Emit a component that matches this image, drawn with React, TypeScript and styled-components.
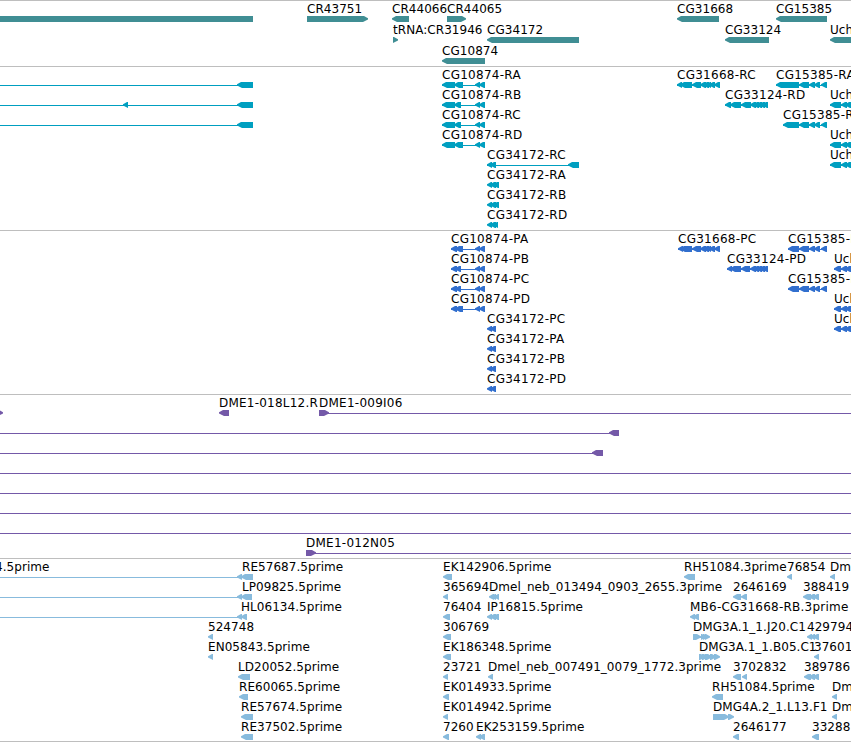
import React from 'react';
import styled, { createGlobalStyle } from 'styled-components';

type Block = [number, number];

interface FeatureData {
  x: number;
  label?: string;
  blocks?: Block[];
  // span of the connecting line
  line?: Block;
  forward?: boolean;
}

interface TrackData {
  name: string;
  color: string;
  rowHeight: number;
  gap: number;
  rows: FeatureData[][];
}

const START = -20;
const END = 871;

const f = (
  x: number,
  label: string,
  blocks: Block[] = [],
  extra: Partial<FeatureData> = {}
): FeatureData => ({ x, label, blocks, ...extra });

const genes: FeatureData[][] = [
  [
    f(START, '', [[START, 253]]),
    f(307, 'CR43751', [[307, 368]], { forward: true }),
    f(392, 'CR44066', [[392, 409]]),
    f(447, 'CR44065', [[447, 466]], { forward: true }),
    f(677, 'CG31668', [[677, 719]]),
    f(776, 'CG15385', [[776, 827]]),
  ],
  [
    f(393, 'tRNA:CR31946', [[393, 398]], { forward: true }),
    f(487, 'CG34172', [[487, 579]]),
    f(725, 'CG33124', [[725, 769]]),
    f(830, 'Uch', [[830, END]]),
  ],
  [f(442, 'CG10874', [[442, 485]])],
];

const cg10874r = (name: string, end: number) =>
  f(442, name, [[442, 455], [454, end], [475, 480], [479, 485]], { line: [442, 485] });
const cg10874p = (name: string, end: number) =>
  f(451, name, [[451, 457], [455, end], [475, 480], [479, 485]], { line: [451, 485] });
const uchR = () => f(830, 'Uch', [[830, 841], [841, 847], [845, 851], [849, 856]], { line: [830, END] });
const uchP = () => f(834, 'Uch', [[834, 841], [841, 847], [845, 851], [849, 856]], { line: [834, END] });

const transcripts: FeatureData[][] = [
  [
    f(START, '', [[237, 253]], { line: [START, 240] }),
    cg10874r('CG10874-RA', 463),
    f(677, 'CG31668-RC', [[677, 682], [680, 692], [692, 701], [700, 706], [703, 709], [706, 711], [709, 715], [714, 720]], { line: [677, 720] }),
    f(776, 'CG15385-RA', [[776, 799], [799, 809], [809, 815], [814, 820], [821, 827]], { line: [776, 827] }),
  ],
  [
    f(START, '', [[123, 128], [237, 253]], { line: [START, 240] }),
    cg10874r('CG10874-RB', 461),
    f(725, 'CG33124-RD', [[725, 731], [730, 741], [741, 751], [750, 756], [753, 759], [756, 762], [759, 765], [762, 768]], { line: [725, 768] }),
    uchR(),
  ],
  [
    f(START, '', [[237, 253]], { line: [START, 240] }),
    cg10874r('CG10874-RC', 461),
    f(783, 'CG15385-RB', [[783, 799], [799, 809], [809, 815], [814, 820], [821, 827]], { line: [783, 827] }),
  ],
  [cg10874r('CG10874-RD', 463), uchR()],
  [f(487, 'CG34172-RC', [[487, 492], [490, 496], [568, 579]], { line: [487, 579] }), uchR()],
  [f(487, 'CG34172-RA', [[487, 492], [490, 496], [493, 499]])],
  [f(487, 'CG34172-RB', [[487, 492], [490, 496], [493, 499]])],
  [f(487, 'CG34172-RD', [[487, 492], [490, 496], [493, 498]])],
];

const cg15385p = (name: string) =>
  f(788, name, [[788, 799], [799, 809], [809, 815], [814, 820], [821, 827]], { line: [788, 827] });

const proteins: FeatureData[][] = [
  [
    cg10874p('CG10874-PA', 463),
    f(678, 'CG31668-PC', [[678, 683], [680, 692], [692, 701], [700, 706], [703, 709], [706, 711], [709, 715], [714, 720]], { line: [678, 720] }),
    cg15385p('CG15385-PA'),
  ],
  [
    cg10874p('CG10874-PB', 461),
    f(727, 'CG33124-PD', [[727, 732], [730, 741], [741, 750], [750, 756], [753, 759], [756, 762], [759, 765], [762, 768]], { line: [727, 768] }),
    uchP(),
  ],
  [cg10874p('CG10874-PC', 461), cg15385p('CG15385-PB')],
  [cg10874p('CG10874-PD', 463), uchP()],
  [f(487, 'CG34172-PC', [[487, 492], [490, 496]]), uchP()],
  [f(487, 'CG34172-PA', [[487, 492], [490, 496]])],
  [f(487, 'CG34172-PB', [[487, 492], [490, 496]])],
  [f(487, 'CG34172-PD', [[487, 492], [490, 496]])],
];

const span = () => f(START, '', [], { line: [START, END] });

const clones: FeatureData[][] = [
  [
    f(START, '', [[START, 3]], { forward: true }),
    f(219, 'DME1-018L12.R', [[219, 229]]),
    f(319, 'DME1-009I06', [[319, 329]], { forward: true, line: [325, END] }),
  ],
  [f(START, '', [[609, 619]], { line: [START, 612] })],
  [f(START, '', [[592, 603]], { line: [START, 595] })],
  [span()],
  [span()],
  [span()],
  [span()],
  [f(306, 'DME1-012N05', [[306, 316]], { forward: true, line: [312, END] })],
];

const ests: FeatureData[][] = [
  [
    f(-5, '4.5prime'),
    f(242, 'RE57687.5prime', [[237, 242], [241, 253]], { line: [START, 250] }),
    f(443, 'EK142906.5prime', [[443, 452]]),
    f(684, 'RH51084.3prime', [[684, 695]]),
    f(787, '76854', [[787, 792]]),
    f(830, 'Dm', [[830, 835]]),
  ],
  [
    f(242, 'LP09825.5prime', [[237, 242], [241, 252]], { line: [START, 250] }),
    f(443, '365694', [[443, 448]]),
    f(489, 'Dmel_neb_013494_0903_2655.3prime', [[489, 494], [491, 496], [494, 499]]),
    f(733, '2646169', [[733, 741], [741, 747]]),
    f(803, '388419', [[803, 811], [809, 815], [813, 819]]),
  ],
  [
    f(241, 'HL06134.5prime', [[237, 242], [241, 247]], { line: [START, 245] }),
    f(443, '76404', [[443, 450]]),
    f(487, 'IP16815.5prime', [[487, 492], [490, 496], [493, 499]]),
    f(690, 'MB6-CG31668-RB.3prime', [[690, 695], [693, 699]]),
  ],
  [
    f(208, '524748', [[208, 213]]),
    f(443, '306769', [[443, 451]]),
    f(693, 'DMG3A.1_1.J20.C1', [[693, 701], [701, 706], [703, 708], [705, 710]], { forward: true, line: [693, 708] }),
    f(807, '429794', [[807, 812], [810, 815], [813, 819]]),
  ],
  [
    f(208, 'EN05843.5prime', [[208, 213]]),
    f(443, 'EK186348.5prime', [[443, 451]]),
    f(699, 'DMG3A.1_1.B05.C1', [[699, 705], [702, 708], [705, 712], [710, 716], [714, 720]], { forward: true }),
    f(814, '37601', [[814, 819]]),
  ],
  [
    f(238, 'LD20052.5prime', [[238, 250]]),
    f(443, '23721', [[443, 448]]),
    f(488, 'Dmel_neb_007491_0079_1772.3prime', [[488, 493]]),
    f(733, '3702832', [[733, 741], [742, 747]]),
    f(804, '389786', [[804, 811], [809, 815], [813, 819]]),
  ],
  [
    f(239, 'RE60065.5prime', [[239, 248]]),
    f(443, 'EK014933.5prime', [[443, 449]]),
    f(712, 'RH51084.5prime', [[712, 723]]),
    f(832, 'Dm', [[832, 837]]),
  ],
  [
    f(241, 'RE57674.5prime', [[241, 253]]),
    f(443, 'EK014942.5prime', [[443, 448]]),
    f(713, 'DMG4A.2_1.L13.F1', [[713, 729], [728, 734]], { forward: true }),
    f(832, 'Dm', [[832, 837]]),
  ],
  [
    f(241, 'RE37502.5prime', [[241, 253]]),
    f(443, '7260', [[443, 449]]),
    f(476, 'EK253159.5prime', [[476, 481], [479, 485]]),
    f(733, '2646177', [[733, 739]]),
    f(812, '33288', [[812, 819]]),
  ],
];

const tracks: TrackData[] = [
  { name: 'genes', color: '#408e94', rowHeight: 21, gap: 2, rows: genes },
  { name: 'transcripts', color: '#009fc0', rowHeight: 20, gap: 3, rows: transcripts },
  { name: 'proteins', color: '#316fce', rowHeight: 20, gap: 3, rows: proteins },
  { name: 'clones', color: '#7459a8', rowHeight: 20, gap: 3, rows: clones },
  { name: 'ests', color: '#88bbdd', rowHeight: 20, gap: 2, rows: ests },
];

const HEAD = 5;

function arrow([start, end]: Block, forward?: boolean) {
  const head = Math.min(HEAD, end - start);
  if (forward) {
    return `M${start} 0H${end - head + 1}L${end} 2.2V3.4L${end - head} 6H${start}Z`;
  }
  return `M${end} 0H${start + head - 1}L${start} 2.2V3.4L${start + head} 6H${end}Z`;
}

// names with dashes are set a little wider
function letterSpacing(label: string) {
  const dashes = label.split('-').length - 1;
  return 0.05 + (dashes ? (0.6 + dashes * 1.6) / label.length : 0);
}

function Feature({ data }: { data: FeatureData }) {
  const { x, label, blocks = [], line, forward } = data;
  return (
    <>
      {label && (
        <Label $x={x} $spacing={letterSpacing(label)}>
          {label}
        </Label>
      )}
      <Glyph width="851" height="6" viewBox="0 0 851 6">
        {line && <rect x={line[0]} y="3" width={line[1] - line[0]} height="1" />}
        {blocks.map((block) => (
          <path key={block[0]} d={arrow(block, forward)} />
        ))}
      </Glyph>
    </>
  );
}

function App() {
  return (
    <>
      <GlobalStyle />
      <Browser>
        {tracks.map((track) => (
          <Track key={track.name} $color={track.color} $gap={track.gap}>
            {track.rows.map((row, i) => (
              <Row key={i} $height={track.rowHeight}>
                {row.map((data) => (
                  <Feature key={data.x} data={data} />
                ))}
              </Row>
            ))}
          </Track>
        ))}
      </Browser>
    </>
  );
}

export default App;

const GlobalStyle = createGlobalStyle`
  body {
    margin: 0;
    background-color: #fff;
    overflow: hidden;
  }
`;

const Browser = styled.main`
  display: flex;
  flex-direction: column;
  width: 851px;
  overflow: hidden;
  border-bottom: 1px solid #bebebe;
  font-family: 'DejaVu Sans', sans-serif;
  font-size: 12px;
  line-height: 14px;
  color: #000;
`;

const Track = styled.section<{ $color: string; $gap: number }>`
  display: flex;
  flex-direction: column;
  padding-bottom: ${(props) => props.$gap}px;
  border-top: 1px solid #bebebe;
  fill: ${(props) => props.$color};
`;

const Row = styled.div<{ $height: number }>`
  position: relative;
  height: ${(props) => props.$height}px;
`;

/* features sit at their own coordinate along the sequence */
const Label = styled.span<{ $x: number; $spacing: number }>`
  position: absolute;
  top: 1px;
  left: ${(props) => props.$x}px;
  letter-spacing: ${(props) => props.$spacing}px;
  white-space: nowrap;
`;

const Glyph = styled.svg`
  position: absolute;
  top: 15px;
  left: 0;
`;
